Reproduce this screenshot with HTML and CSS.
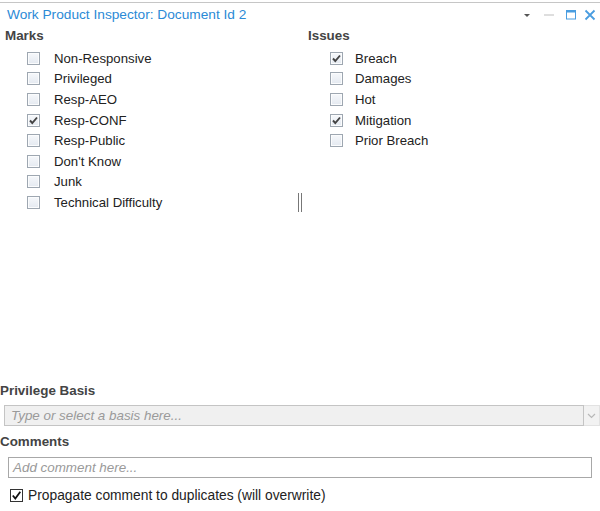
FILE: index.html
```html
<!DOCTYPE html>
<html>
<head>
<meta charset="utf-8">
<link rel="stylesheet" href="styles.css">
</head>
<body>
<div class="panel">
  <div class="header">
    <span class="title">Work Product Inspector: Document Id 2</span>
    <div class="tools">
      <svg class="ic ic-drop" width="8" height="6" viewBox="0 0 8 6"><path d="M1 2 H7 L4 5 Z" fill="#555"/></svg>
      <svg class="ic ic-min" width="12" height="6" viewBox="0 0 12 6"><rect x="1" y="2" width="10" height="2" fill="#dedede"/></svg>
      <svg class="ic ic-max" width="12" height="12" viewBox="0 0 12 12"><rect x="1.5" y="1.5" width="9" height="8.5" fill="none" stroke="#4a9de0" stroke-width="1"/><rect x="1" y="1" width="10" height="2.5" fill="#4a9de0"/></svg>
      <svg class="ic ic-close" width="12" height="12" viewBox="0 0 12 12"><path d="M1.5 1.5 L10.5 10.5 M10.5 1.5 L1.5 10.5" stroke="#4a9de0" stroke-width="1.8"/></svg>
    </div>
  </div>
  <div class="columns">
    <div class="col col-left">
      <div class="heading">Marks</div>
      <div class="row"><span class="cb"></span><span class="lbl">Non-Responsive</span></div>
      <div class="row"><span class="cb"></span><span class="lbl">Privileged</span></div>
      <div class="row"><span class="cb"></span><span class="lbl">Resp-AEO</span></div>
      <div class="row"><span class="cb on"><svg width="11" height="11" viewBox="0 0 11 11"><path d="M2 5.5 L4.3 8 L9 2.5" fill="none" stroke="#444" stroke-width="1.9"/></svg></span><span class="lbl">Resp-CONF</span></div>
      <div class="row"><span class="cb"></span><span class="lbl">Resp-Public</span></div>
      <div class="row"><span class="cb"></span><span class="lbl">Don't Know</span></div>
      <div class="row"><span class="cb"></span><span class="lbl">Junk</span></div>
      <div class="row"><span class="cb"></span><span class="lbl">Technical Difficulty</span><span class="grip"></span></div>
    </div>
    <div class="col col-right">
      <div class="heading">Issues</div>
      <div class="row"><span class="cb on"><svg width="11" height="11" viewBox="0 0 11 11"><path d="M2 5.5 L4.3 8 L9 2.5" fill="none" stroke="#444" stroke-width="1.9"/></svg></span><span class="lbl">Breach</span></div>
      <div class="row"><span class="cb"></span><span class="lbl">Damages</span></div>
      <div class="row"><span class="cb"></span><span class="lbl">Hot</span></div>
      <div class="row"><span class="cb on"><svg width="11" height="11" viewBox="0 0 11 11"><path d="M2 5.5 L4.3 8 L9 2.5" fill="none" stroke="#444" stroke-width="1.9"/></svg></span><span class="lbl">Mitigation</span></div>
      <div class="row"><span class="cb"></span><span class="lbl">Prior Breach</span></div>
    </div>
  </div>
  <div class="bottom">
    <div class="heading heading-flush">Privilege Basis</div>
    <div class="combo">
      <div class="combo-field"><span class="ph">Type or select a basis here...</span></div>
      <div class="combo-btn"><svg width="9" height="6" viewBox="0 0 9 6"><path d="M1 1 L4.5 4.5 L8 1" fill="none" stroke="#b8b8b8" stroke-width="1.2"/></svg></div>
    </div>
    <div class="heading heading-flush heading-comments">Comments</div>
    <div class="comment"><span class="ph">Add comment here...</span></div>
    <div class="propagate">
      <span class="cb2"><svg width="11" height="11" viewBox="0 0 11 11"><path d="M1.8 5.5 L4.3 8.5 L9.3 1.8" fill="none" stroke="#111" stroke-width="1.8"/></svg></span>
      <span class="plbl">Propagate comment to duplicates (will overwrite)</span>
    </div>
  </div>
</div>
</body>
</html>
```

FILE: styles.css
```css
html, body {
  margin: 0;
  padding: 0;
  background: #fff;
}
body {
  font-family: "Liberation Sans", Arial, sans-serif;
  font-size: 13px;
  color: #222;
}
.panel {
  width: 600px;
  height: 509px;
  margin-top: 2px;
  border-top: 1px solid #c6c6c6;
  display: flex;
  flex-direction: column;
  box-sizing: border-box;
}
.header {
  height: 23px;
  display: flex;
  align-items: center;
  padding-left: 7px;
  padding-right: 4px;
}
.title {
  color: #2b8ad6;
  font-size: 13.7px;
}
.tools {
  margin-left: auto;
  display: flex;
  align-items: center;
}
.ic { display: block; }
.ic-drop { margin-right: 12px; margin-top: 1px; }
.ic-min { margin-right: 10px; }
.ic-max { margin-right: 7px; }
.columns {
  flex: 1;
  display: grid;
  grid-template-columns: 303px 1fr;
  padding-left: 5px;
}
.col {
  display: flex;
  flex-direction: column;
}
.heading {
  font-weight: bold;
  font-size: 13.4px;
  color: #444;
  line-height: 19px;
  height: 19px;
  margin-bottom: 3px;
}
.row {
  height: 20.6px;
  display: flex;
  align-items: center;
  padding-left: 22px;
}
.lbl {
  font-size: 13.2px;
}
.cb {
  width: 13px;
  height: 13px;
  box-sizing: border-box;
  border: 1px solid #9ea7b1;
  background: linear-gradient(#f6f8fb, #e4e9f0);
  box-shadow: inset 0 0 0 1px #fbfcfd;
  display: flex;
  align-items: center;
  justify-content: center;
  flex: none;
}
.cb svg { display: block; }
.col-left .lbl { margin-left: 14px; }
.col-right .lbl { margin-left: 12px; }
.grip {
  margin-left: auto;
  margin-right: 6px;
  width: 2px;
  height: 19px;
  border-left: 1px solid #777;
  border-right: 1px solid #777;
}
.bottom {
  display: flex;
  flex-direction: column;
  padding-bottom: 9px;
}
.heading-flush {
  margin-bottom: 0;
}
.combo {
  margin-top: 5px;
  margin-left: 4px;
  height: 21px;
  display: flex;
}
.combo-field {
  width: 580px;
  box-sizing: border-box;
  border: 1px solid #c4c4c4;
  background: #f0f0f0;
  display: flex;
  align-items: center;
  padding-left: 6px;
}
.combo-btn {
  width: 16px;
  box-sizing: border-box;
  border: 1px solid #e2e2e2;
  border-left: none;
  background: #f2f2f2;
  display: flex;
  align-items: center;
  justify-content: center;
}
.ph {
  font-style: italic;
  color: #9a9a9a;
  font-size: 13.4px;
}
.heading-comments {
  margin-top: 6px;
}
.comment {
  margin-top: 6px;
  margin-left: 8px;
  width: 584px;
  height: 21px;
  box-sizing: border-box;
  border: 1px solid #a8a8a8;
  display: flex;
  align-items: center;
  padding-left: 4px;
}
.propagate {
  margin-top: 10px;
  margin-left: 10px;
  height: 14px;
  display: flex;
  align-items: center;
}
.cb2 {
  width: 13px;
  height: 13px;
  box-sizing: border-box;
  border: 1px solid #333;
  background: #fff;
  display: flex;
  align-items: center;
  justify-content: center;
}
.cb2 svg { display: block; }
.plbl {
  margin-left: 5px;
  font-size: 13.8px;
  color: #222;
}
```
